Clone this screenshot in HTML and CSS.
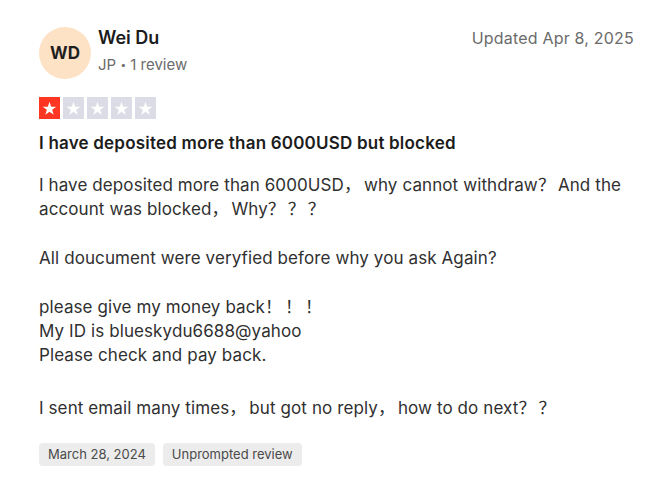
FILE: index.html
```html
<!DOCTYPE html>
<html lang="en">
<head>
<meta charset="utf-8">
<link rel="stylesheet" href="styles.css">
</head>
<body>
<article class="review">
  <header class="head">
    <div class="author">
      <div class="avatar">WD</div>
      <div class="meta">
        <div class="name">Wei Du</div>
        <div class="sub">JP <span class="dot">•</span> 1 review</div>
      </div>
    </div>
    <div class="date">Updated Apr 8, 2025</div>
  </header>
  <div class="stars">
    <span class="star on"><svg viewBox="0 0 20 20"><path d="M10 3.6l1.6 4.7h4.9l-4 2.9 1.5 4.7-4-2.9-4 2.9 1.5-4.7-4-2.9h4.9z" fill="#fff"/></svg></span>
    <span class="star"><svg viewBox="0 0 20 20"><path d="M10 3.6l1.6 4.7h4.9l-4 2.9 1.5 4.7-4-2.9-4 2.9 1.5-4.7-4-2.9h4.9z" fill="#fff"/></svg></span>
    <span class="star"><svg viewBox="0 0 20 20"><path d="M10 3.6l1.6 4.7h4.9l-4 2.9 1.5 4.7-4-2.9-4 2.9 1.5-4.7-4-2.9h4.9z" fill="#fff"/></svg></span>
    <span class="star"><svg viewBox="0 0 20 20"><path d="M10 3.6l1.6 4.7h4.9l-4 2.9 1.5 4.7-4-2.9-4 2.9 1.5-4.7-4-2.9h4.9z" fill="#fff"/></svg></span>
    <span class="star"><svg viewBox="0 0 20 20"><path d="M10 3.6l1.6 4.7h4.9l-4 2.9 1.5 4.7-4-2.9-4 2.9 1.5-4.7-4-2.9h4.9z" fill="#fff"/></svg></span>
  </div>
  <h2 class="title">I have deposited more than 6000USD but blocked</h2>
  <div class="body">
    <p>I have deposited more than 6000USD<span class="fw">，</span>why cannot withdraw<span class="fw">？</span>And the account was blocked<span class="fw">，</span>Why<span class="fw">？？？</span></p>
    <p>All doucument were veryfied before why you ask Again?</p>
    <p>please give my money back<span class="fw">！！！</span><br>My ID is blueskydu6688@yahoo<br>Please check and pay back.</p>
    <p class="last">I sent email many times<span class="fw">，</span>but got no reply<span class="fw">，</span>how to do next<span class="fw">？？</span></p>
  </div>
  <div class="tags">
    <span class="tag">March 28, 2024</span>
    <span class="tag">Unprompted review</span>
  </div>
</article>
</body>
</html>
```
FILE: styles.css
```css
* { box-sizing: border-box; }
html, body { margin: 0; background: #fff; }
body {
  font-family: Inter, "Noto Sans CJK SC", sans-serif;
  color: #2f2f2f;
  width: 650px;
  height: 485px;
  overflow: hidden;
}
.review { padding: 27px 16px 0 39px; }
.head { display: flex; justify-content: space-between; align-items: flex-start; }
.author { display: flex; align-items: flex-start; gap: 7px; }
.avatar {
  width: 52px; height: 52px; border-radius: 50%;
  background: #fde2c6;
  display: flex; align-items: center; justify-content: center;
  font-size: 17px; font-weight: 700; color: #1f1f1f;
}
.meta { padding-top: 0; }
.name { font-size: 18px; font-weight: 600; color: #1c1c1c; line-height: 22px; }
.sub { font-size: 15px; color: #6b6b6b; line-height: 20px; margin-top: 5px; }
.dot { font-size: 10px; vertical-align: 2px; }
.date { font-size: 16px; letter-spacing: 0.2px; color: #6b6b6b; line-height: 22px; }
.stars { display: flex; gap: 3px; margin-top: 18px; }
.star { width: 21px; height: 22px; background: #dcdce6; display: flex; align-items: center; }
.star.on { background: #ff3722; }
.star svg { width: 21px; height: 21px; }
.title { font-size: 17px; font-weight: 600; letter-spacing: 0.2px; color: #1c1c1c; margin: 13px 0 0; line-height: 22px; }
.body { margin-top: 19px; font-size: 17px; letter-spacing: 0.1px; line-height: 24px; color: #303030; }
.body p { margin: 0 0 25px; }
.body p.last { margin-top: 29px; }
.fw { letter-spacing: 3px; }
.tags { display: flex; gap: 8px; margin-top: -2px; }
.tag { background: #ececec; border-radius: 4px; font-size: 13px; color: #4a4a4a; padding: 2px 9px; line-height: 19px; }
```
